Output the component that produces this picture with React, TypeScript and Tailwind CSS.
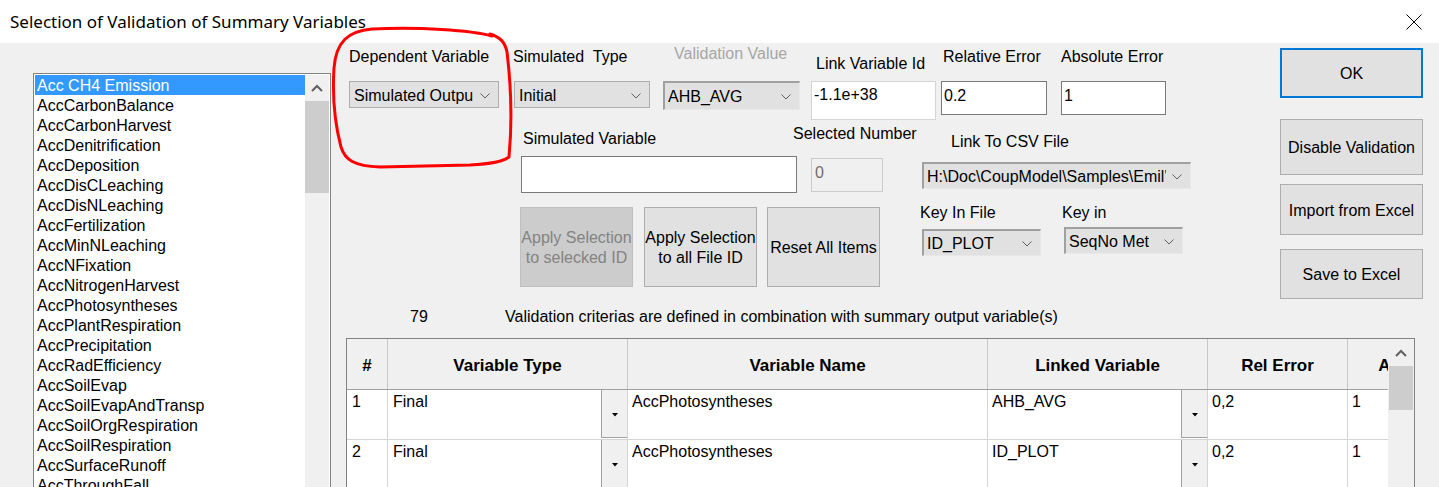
import React from "react";

const listItems = [
  "Acc CH4 Emission",
  "AccCarbonBalance",
  "AccCarbonHarvest",
  "AccDenitrification",
  "AccDeposition",
  "AccDisCLeaching",
  "AccDisNLeaching",
  "AccFertilization",
  "AccMinNLeaching",
  "AccNFixation",
  "AccNitrogenHarvest",
  "AccPhotosyntheses",
  "AccPlantRespiration",
  "AccPrecipitation",
  "AccRadEfficiency",
  "AccSoilEvap",
  "AccSoilEvapAndTransp",
  "AccSoilOrgRespiration",
  "AccSoilRespiration",
  "AccSurfaceRunoff",
  "AccThroughFall",
];

function Chevron() {
  return (
    <svg width="10" height="6" viewBox="0 0 10 6" className="ml-[6px] shrink-0">
      <polyline points="0.5,0.5 5,5 9.5,0.5" fill="none" stroke="#606060" strokeWidth="1" />
    </svg>
  );
}

function UpChevron() {
  return (
    <svg width="12" height="8" viewBox="0 0 12 8">
      <polyline points="1,7 6,2 11,7" fill="none" stroke="#606060" strokeWidth="2" />
    </svg>
  );
}

function Combo({ text, className, inset }: { text: string; className: string; inset?: boolean }) {
  return (
    <div
      className={
        "flex items-center justify-between bg-[#e1e1e1] pr-[8px] pt-[2px] " +
        (inset
          ? "border-t-2 border-l-2 border-b border-r border-t-[#a0a0a0] border-l-[#a0a0a0] border-b-[#e8e8e8] border-r-[#e8e8e8] pl-[3px] "
          : "border border-[#adadad] pl-[4px] ") +
        className
      }
    >
      <span className="overflow-hidden whitespace-nowrap leading-[18px]">{text}</span>
      <Chevron />
    </div>
  );
}

function TableDrop() {
  return (
    <div className="flex h-[48px] w-[26px] items-center justify-center border-l border-b border-[#a0a0a0] bg-[#f0f0f0] pt-[3px]">
      <svg width="6" height="4" viewBox="0 0 6 4">
        <polygon points="0,0 6,0 3,3.5" fill="#000" />
      </svg>
    </div>
  );
}

function Btn({ children, className }: { children: React.ReactNode; className: string }) {
  return (
    <div className={"flex items-center justify-center pt-[2px] text-center leading-[20px] " + className}>
      {children}
    </div>
  );
}

export default function App() {
  const rows = [
    { n: "1", type: "Final", name: "AccPhotosyntheses", linked: "AHB_AVG", rel: "0,2", abs: "1" },
    { n: "2", type: "Final", name: "AccPhotosyntheses", linked: "ID_PLOT", rel: "0,2", abs: "1" },
  ];
  return (
    <div className="relative flex h-[487px] w-[1439px] flex-col overflow-hidden bg-[#f0f0f0] font-['Liberation_Sans',Arial,sans-serif] text-[16px] text-black">
      {/* Title bar */}
      <div className="flex h-[43px] shrink-0 items-center justify-between bg-white">
        <div className="pl-[10px] font-['Noto_Sans',sans-serif] text-[17px]">
          Selection of Validation of Summary Variables
        </div>
        <svg width="16" height="16" viewBox="0 0 16 16" className="mr-[17px]">
          <line x1="0.5" y1="0.5" x2="15.5" y2="15.5" stroke="#000" strokeWidth="1" />
          <line x1="15.5" y1="0.5" x2="0.5" y2="15.5" stroke="#000" strokeWidth="1" />
        </svg>
      </div>

      {/* Body */}
      <div className="flex flex-1">
        {/* Left list */}
        <div className="w-[331px] shrink-0 pl-[33px] pt-[30px]">
          <div className="flex h-[500px] w-[298px] border border-[#828282] bg-white p-px">
            <div className="w-[270px]">
              {listItems.map((it, i) => (
                <div
                  key={it}
                  className={
                    "h-[20px] whitespace-nowrap pl-[2px] leading-[22px] " +
                    (i === 0 ? "bg-[#3399ff] text-white" : "")
                  }
                >
                  {it}
                </div>
              ))}
            </div>
            <div className="flex w-[24px] flex-col bg-[#f0f0f0]">
              <div className="flex h-[26px] items-center justify-center">
                <UpChevron />
              </div>
              <div className="h-[92px] bg-[#cdcdcd]" />
            </div>
          </div>
        </div>

        {/* Right area */}
        <div className="flex flex-1 flex-col">
          <div className="flex h-[262px]">
            {/* Controls */}
            <div className="flex w-[949px] flex-col">
              {/* Row 1 */}
              <div className="flex h-[78px] pl-[18px]">
                <div className="flex w-[150px] flex-col">
                  <div className="h-[38px] pt-[5px] leading-[18px]">Dependent Variable</div>
                  <Combo text="Simulated Outpu" className="h-[27px] w-[150px]" />
                </div>
                <div className="ml-[14px] flex w-[137px] flex-col">
                  <div className="h-[38px] whitespace-pre pt-[5px] leading-[18px]">Simulated  Type</div>
                  <Combo text="Initial" className="ml-[1px] h-[27px] w-[136px]" />
                </div>
                <div className="ml-[13px] flex w-[137px] flex-col">
                  <div className="h-[38px] pl-[11px] pt-[2px] leading-[18px] text-[#a6a6a6]">Validation Value</div>
                  <Combo text="AHB_AVG" inset className="h-[29px] w-[137px]" />
                </div>
                <div className="ml-[11px] flex w-[125px] flex-col">
                  <div className="h-[38px] pl-[5px] pt-[12px] leading-[18px]">Link Variable Id</div>
                  <div className="h-[39px] w-[125px] border border-[#d4d4d4] bg-white pl-[2px] pt-[4px] leading-[18px]">
                    -1.1e+38
                  </div>
                </div>
                <div className="ml-[5px] flex w-[106px] flex-col">
                  <div className="h-[38px] pl-[2px] pt-[5px] leading-[18px]">Relative Error</div>
                  <div className="h-[34px] w-[106px] border border-[#7a7a7a] bg-white pl-[2px] pt-[5px] leading-[18px]">
                    0.2
                  </div>
                </div>
                <div className="ml-[14px] flex w-[105px] flex-col">
                  <div className="h-[38px] pt-[5px] leading-[18px]">Absolute Error</div>
                  <div className="h-[34px] w-[105px] border border-[#7a7a7a] bg-white pl-[2px] pt-[5px] leading-[18px]">
                    1
                  </div>
                </div>
              </div>

              {/* Row 2 */}
              <div className="flex h-[74px] pl-[189px]">
                <div className="flex w-[278px] flex-col">
                  <div className="pl-[3px] pt-[9px] leading-[18px]">Simulated Variable</div>
                  <div className="ml-[1px] mt-[8px] h-[37px] w-[276px] border border-[#7a7a7a] bg-white" />
                </div>
                <div className="-ml-[5px] flex w-[123px] flex-col">
                  <div className="whitespace-nowrap pt-[4px] leading-[18px]">Selected Number</div>
                  <div className="ml-[18px] mt-[15px] h-[34px] w-[72px] border border-[#cccccc] bg-[#f0f0f0] pl-[3px] pt-[5px] leading-[18px] text-[#6d6d6d]">
                    0
                  </div>
                </div>
                <div className="ml-[6px] flex w-[269px] flex-col">
                  <div className="pl-[29px] pt-[12px] leading-[18px]">Link To CSV File</div>
                  <Combo text="H:\Doc\CoupModel\Samples\Emil'" inset className="mt-[11px] h-[27px] w-[269px]" />
                </div>
              </div>

              {/* Row 3 */}
              <div className="flex h-[110px] pl-[189px]">
                <div className="mt-[12px] flex h-[80px] gap-[11px]">
                  <Btn className="w-[113px] border border-[#bfbfbf] bg-[#cccccc] text-[#838383]">
                    Apply Selection to selecked ID
                  </Btn>
                  <Btn className="w-[113px] border border-[#adadad] bg-[#e1e1e1]">
                    Apply Selection to all File ID
                  </Btn>
                  <Btn className="-ml-px w-[113px] border border-[#adadad] bg-[#e1e1e1]">Reset All Items</Btn>
                </div>
                <div className="ml-[40px] flex w-[121px] flex-col">
                  <div className="pt-[9px] leading-[18px]">Key In File</div>
                  <Combo text="ID_PLOT" inset className="ml-[2px] mt-[7px] h-[27px] w-[119px]" />
                </div>
                <div className="ml-[21px] flex w-[121px] flex-col">
                  <div className="pt-[9px] leading-[18px]">Key in</div>
                  <Combo text="SeqNo Met" inset className="ml-[2px] mt-[5px] h-[27px] w-[119px]" />
                </div>
              </div>
            </div>

            {/* Buttons column */}
            <div className="flex w-[143px] flex-col pt-[5px]">
              <Btn className="h-[50px] border-2 border-[#0078d7] bg-[#e1e1e1]">OK</Btn>
              <Btn className="mt-[21px] h-[56px] border border-[#adadad] bg-[#e1e1e1]">Disable Validation</Btn>
              <Btn className="mt-[9px] h-[51px] border border-[#adadad] bg-[#e1e1e1]">Import from Excel</Btn>
              <Btn className="mt-[14px] h-[50px] border border-[#adadad] bg-[#e1e1e1]">Save to Excel</Btn>
            </div>
          </div>

          {/* Info row */}
          <div className="flex h-[33px] pl-[79px] pt-[3px] leading-[18px]">
            <span className="w-[95px]">79</span>
            <span className="whitespace-nowrap">
              Validation criterias are defined in combination with summary output variable(s)
            </span>
          </div>

          {/* Table */}
          <div className="ml-[15px] flex h-[170px] w-[1069px] border border-[#828282] bg-white">
            <div className="w-[1041px] overflow-hidden">
              <div className="flex h-[51px] w-[1141px] border-b border-[#a0a0a0] bg-[#f0f0f0] text-[17px] font-bold">
                {[
                  ["#", "w-[41px]"],
                  ["Variable Type", "w-[240px]"],
                  ["Variable Name", "w-[360px]"],
                  ["Linked Variable", "w-[220px]"],
                  ["Rel Error", "w-[140px]"],
                  ["Abs Error", "w-[140px]"],
                ].map(([t, w]) => (
                  <div
                    key={t}
                    className={"flex shrink-0 items-center justify-center whitespace-nowrap border-r border-[#c8c8c8] pt-[3px] " + w}
                  >
                    {t}
                  </div>
                ))}
              </div>
              {rows.map((r) => (
                <div key={r.n} className="flex h-[50px] w-[1141px] border-b border-[#d4d4d4] leading-[18px]">
                  <div className="w-[41px] shrink-0 border-r border-[#d4d4d4] pl-[5px] pt-[3px]">{r.n}</div>
                  <div className="flex w-[240px] shrink-0 justify-between border-r border-[#d4d4d4]">
                    <span className="pl-[5px] pt-[3px]">{r.type}</span>
                    <TableDrop />
                  </div>
                  <div className="w-[360px] shrink-0 border-r border-[#d4d4d4] pl-[4px] pt-[3px]">{r.name}</div>
                  <div className="flex w-[220px] shrink-0 justify-between border-r border-[#d4d4d4]">
                    <span className="pl-[4px] pt-[3px]">{r.linked}</span>
                    <TableDrop />
                  </div>
                  <div className="w-[140px] shrink-0 border-r border-[#d4d4d4] pl-[4px] pt-[3px]">{r.rel}</div>
                  <div className="w-[140px] shrink-0 border-r border-[#d4d4d4] pl-[4px] pt-[3px]">{r.abs}</div>
                </div>
              ))}
            </div>
            <div className="flex w-[26px] flex-col bg-[#f0f0f0]">
              <div className="flex h-[27px] items-center justify-center">
                <UpChevron />
              </div>
              <div className="mx-[1px] h-[44px] bg-[#cdcdcd]" />
            </div>
          </div>
        </div>
      </div>

      {/* Red hand-drawn annotation */}
      <svg
        className="pointer-events-none absolute left-0 top-0"
        width="1439"
        height="487"
        viewBox="0 0 1439 487"
      >
        <path
          d="M 492 36 C 470 30, 420 27, 372 29 C 348 31, 336 42, 334 68 C 332 100, 336 128, 341 147 C 345 160, 354 166, 380 167 L 470 165 C 490 164, 503 162, 509 157 C 512 125, 511 85, 507 52 C 505 42, 500 37, 490 34"
          fill="none"
          stroke="#ff0000"
          strokeWidth="3"
          strokeLinecap="round"
          strokeLinejoin="round"
        />
      </svg>
    </div>
  );
}
